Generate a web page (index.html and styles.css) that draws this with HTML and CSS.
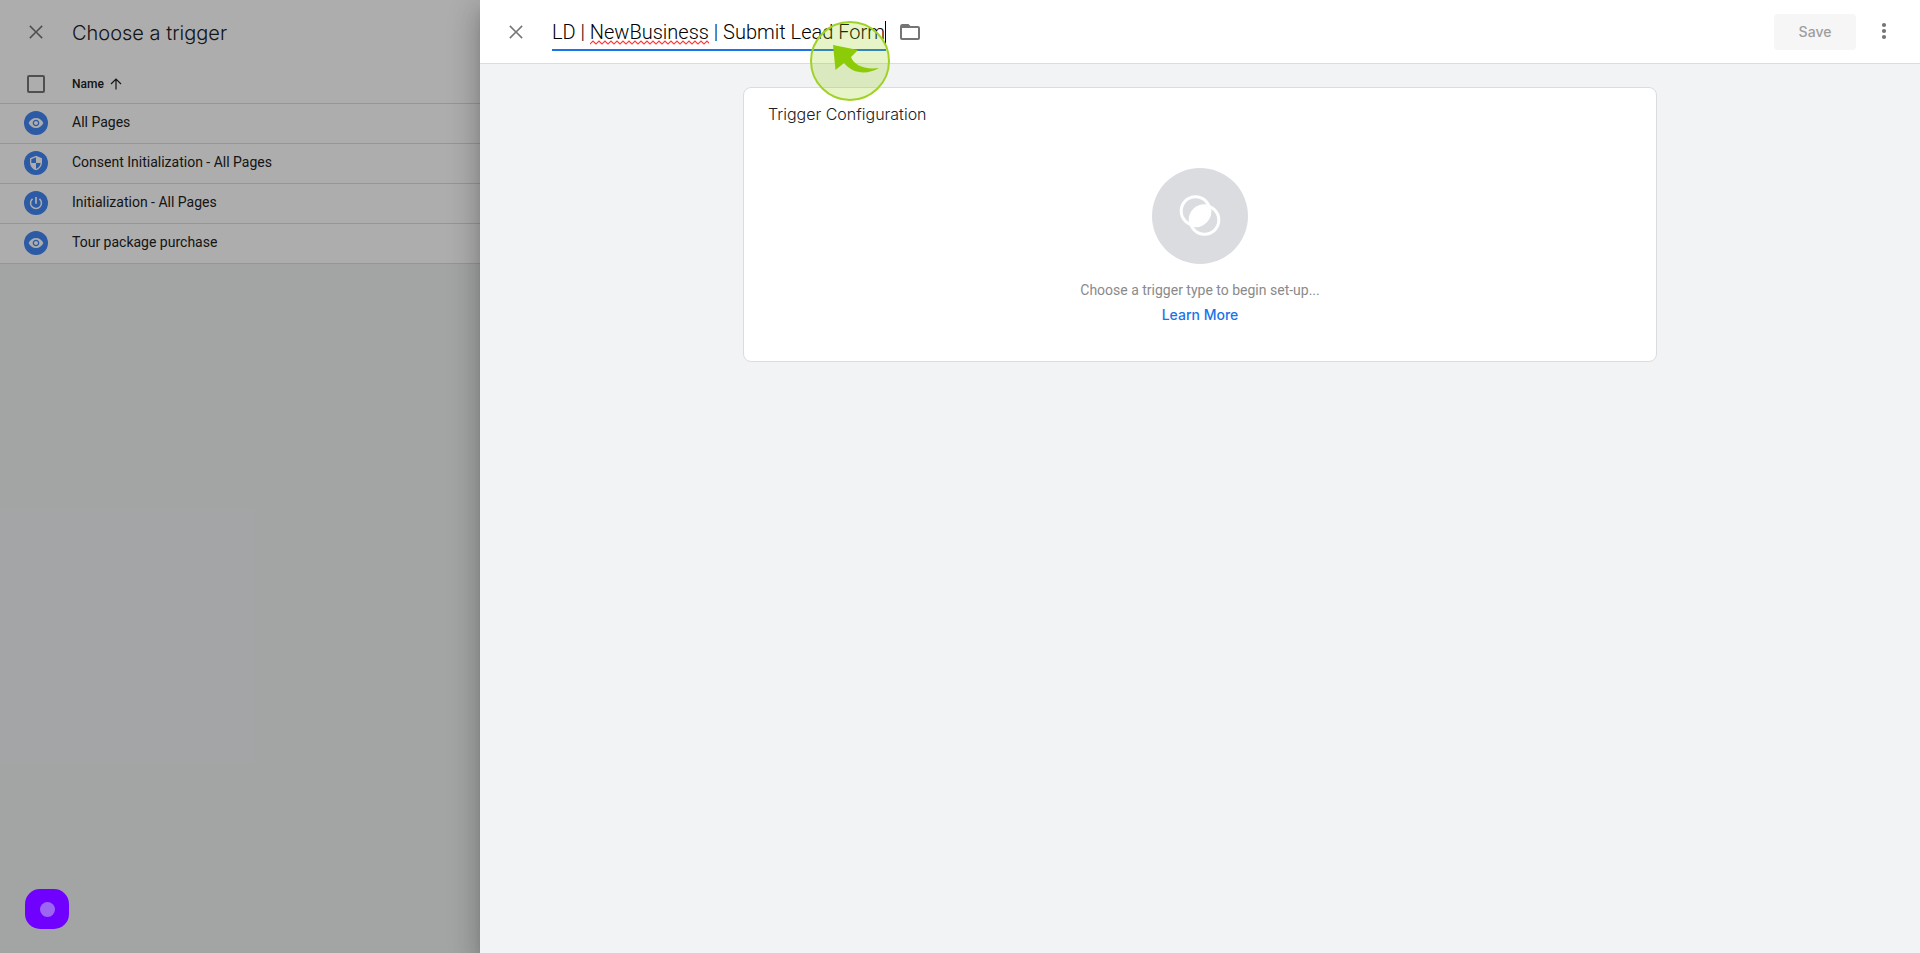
FILE: index.html
```html
<!DOCTYPE html>
<html lang="en">
<head>
<meta charset="utf-8">
<title>Trigger Configuration</title>
<link rel="stylesheet" href="styles.css">
</head>
<body>
<svg class="sprite" aria-hidden="true">
  <symbol id="close" viewBox="0 0 24 24"><path d="M18.7 6.4 17.6 5.3 12 10.9 6.4 5.3 5.3 6.4 10.9 12l-5.6 5.6 1.1 1.1 5.6-5.6 5.6 5.6 1.1-1.1-5.6-5.6z"/></symbol>
  <symbol id="eye" viewBox="0 0 24 24"><path d="M12 4.5C7 4.5 2.73 7.61 1 12c1.73 4.39 6 7.5 11 7.5s9.27-3.11 11-7.5c-1.73-4.39-6-7.5-11-7.5zM12 17c-2.76 0-5-2.24-5-5s2.24-5 5-5 5 2.24 5 5-2.24 5-5 5zm0-8c-1.66 0-3 1.34-3 3s1.34 3 3 3 3-1.34 3-3-1.34-3-3-3z"/></symbol>
  <symbol id="shield" viewBox="0 0 24 24"><path d="M12 1 3 5v6c0 5.55 3.84 10.74 9 12 5.16-1.26 9-6.45 9-12V5l-9-4zm0 10.990h7c-.53 4.120-3.280 7.790-7 8.940V12H5V6.300l7-3.110v8.800z"/></symbol>
  <symbol id="power" viewBox="0 0 24 24"><path d="M13.300 3h-2.600v10h2.600V3zm4.700 2-1.700 1.700A6.900 6.900 0 0 1 19 12a7 7 0 1 1-11.300-5.300L6 5a9.300 9.300 0 1 0 12 0z"/></symbol>
</svg>

<div class="page">
  <main class="picker">
    <header class="picker-header">
      <button class="icon-button" aria-label="Close trigger list"><svg class="icon"><use href="#close"/></svg></button>
      <h1 class="title">Choose a trigger</h1>
    </header>
    <table class="triggers">
      <thead>
        <tr>
          <th class="mark"><input class="check" type="checkbox" aria-label="Select all triggers"></th>
          <th>
            <span class="sort">Name
              <svg class="arrow" viewBox="0 0 12 12"><path d="M6 11.500V1M1 6l5-5 5 5"/></svg>
            </span>
          </th>
        </tr>
      </thead>
      <tbody>
        <tr><td class="mark"><span class="badge"><svg><use href="#eye"/></svg></span></td><td class="name">All Pages</td></tr>
        <tr><td class="mark"><span class="badge"><svg><use href="#shield"/></svg></span></td><td class="name">Consent Initialization - All Pages</td></tr>
        <tr><td class="mark"><span class="badge"><svg><use href="#power"/></svg></span></td><td class="name">Initialization - All Pages</td></tr>
        <tr><td class="mark"><span class="badge"><svg><use href="#eye"/></svg></span></td><td class="name">Tour package purchase</td></tr>
      </tbody>
    </table>
  </main>
  <div class="scrim"></div>

  <section class="sheet">
    <header class="sheet-header">
      <button class="icon-button" aria-label="Close"><svg class="icon"><use href="#close"/></svg></button>
      <div class="field">
        <input class="name-input" type="text" aria-label="Trigger name" spellcheck="false" value="LD | NewBusiness | Submit Lead Form">
        <svg class="squiggle" aria-hidden="true">
          <defs><pattern id="wave" width="6" height="5" patternUnits="userSpaceOnUse"><path d="M-1 3 0 4 3 1 6 4 7 3"/></pattern></defs>
          <rect width="100%" height="5" fill="url(#wave)"/>
        </svg>
        <span class="caret"></span>
        <svg class="pointer" viewBox="0 0 80 80" aria-hidden="true">
          <circle cx="40" cy="40" r="39"/>
          <path d="M23 24 48 29 41 36C44 44 54 49 69 47 57 54 43 53 34 42L25.500 49z"/>
        </svg>
      </div>
      <button class="folder" aria-label="Move to folder">
        <svg viewBox="0 0 20 16"><path class="outline" d="M1 2.500V14Q1 15 2 15H18Q19 15 19 14V4Q19 3 18 3H10L8 1H2Q1 1 1 2.500z"/><path class="tab" d="M1 1h7l2 3H1z"/></svg>
      </button>
      <button class="save" disabled>Save</button>
      <button class="icon-button more" aria-label="More options"><svg class="icon" viewBox="0 0 24 24"><circle cx="12" cy="5" r="2.100"/><circle cx="12" cy="11" r="2.100"/><circle cx="12" cy="17" r="2.100"/></svg></button>
    </header>
    <div class="sheet-body">
      <article class="card">
        <h2 class="card-title">Trigger Configuration</h2>
        <div class="empty">
          <svg class="empty-art" viewBox="0 0 96 96" aria-hidden="true">
            <circle cx="48" cy="48" r="48" fill="#dadce0"/>
            <g fill="none" stroke="#fff" stroke-width="3"><circle cx="43.500" cy="43" r="14.300"/><circle cx="52.500" cy="52" r="14.300"/></g>
            <path fill="#fff" d="M58 38A15.500 15.500 0 0 0 38 58 15.500 15.500 0 0 0 58 38z"/>
          </svg>
          <p class="hint">Choose a trigger type to begin set-up...</p>
          <a class="learn" href="#">Learn More</a>
        </div>
      </article>
    </div>
  </section>
  <button class="recorder" aria-label="Recorder"><span class="recorder-dot"></span></button>
</div>
</body>
</html>
```
FILE: styles.css
```css
* { box-sizing: border-box; }
body { margin: 0; font: 14px/20px Roboto, sans-serif; color: #212121; }
button { border: 0; padding: 0; background: none; font: inherit; }
.sprite { position: absolute; width: 0; height: 0; }

.page { position: relative; display: grid; grid-template-columns: 25% 75%; min-height: 100vh; background: #f1f3f4; overflow: hidden; }
.picker { min-width: 0; }
.picker-header { display: flex; align-items: center; gap: 24px; height: 64px; padding: 0 24px; background: #fff; }
.icon-button { display: flex; width: 24px; height: 24px; flex: none; }
.icon { width: 24px; height: 24px; fill: #757575; }
.title { margin: 0; padding-top: 2px; font: 300 20px/28px Inter, sans-serif; color: #202124; }

.triggers { width: 100%; border-collapse: collapse; background: #fff; }
.triggers th, .triggers td { height: 40px; padding: 0; border-bottom: 1px solid #dadce0; text-align: left; vertical-align: middle; }
.triggers th { height: 39px; padding-top: 2px; font-size: 12px; font-weight: 500; }
.triggers .mark { width: 72px; padding-left: 24px; }
.triggers .name { padding-bottom: 2px; }
.sort { display: flex; align-items: center; gap: 6px; }
.arrow { width: 12px; height: 12px; fill: none; stroke: #212121; stroke-width: 1.200; }
.check { display: block; appearance: none; width: 18px; height: 18px; margin: 0 3px; border: 2px solid #757575; border-radius: 2px; }
.badge { display: flex; align-items: center; justify-content: center; width: 24px; height: 24px; border-radius: 50%; background: #4285f4; }
.badge svg { width: 16px; height: 16px; fill: #fff; }

.scrim { position: absolute; inset: 0; background: rgba(0, 0, 0, .32); }
.sheet { position: relative; background: #f1f3f4; box-shadow: 0 8px 10px -5px rgba(0, 0, 0, .2), 0 16px 24px 2px rgba(0, 0, 0, .14), 0 6px 30px 5px rgba(0, 0, 0, .12); }
.sheet-header { display: flex; align-items: center; height: 64px; padding: 0 24px; border-bottom: 1px solid #dadce0; background: #fff; }
.field { position: relative; width: 334px; margin: 0 14px 0 24px; }
.name-input { display: block; width: 100%; height: 38px; padding: 2px 0 0; border: 0; border-bottom: 2px solid #1a73e8; outline: 0; background: none; font: 300 20px/28px Roboto, sans-serif; color: #000; }
.squiggle { position: absolute; left: 38px; top: 27px; width: 119px; height: 5px; }
.squiggle path { fill: none; stroke: #f33; stroke-width: 1.200; }
.caret { position: absolute; right: 0; top: 8px; width: 1px; height: 24px; background: #000; }
.pointer { position: absolute; z-index: 1; right: -4px; top: 8px; width: 80px; height: 80px; pointer-events: none; }
.pointer circle { fill: rgba(143, 206, 0, .22); stroke: #a0d225; stroke-width: 2; }
.pointer path { fill: #8bcb08; }
.folder { width: 20px; height: 16px; }
.folder svg { display: block; width: 20px; height: 16px; }
.folder .outline { fill: none; stroke: #757575; stroke-width: 2; }
.folder .tab { fill: #757575; }
.save { width: 82px; height: 36px; margin-left: auto; border-radius: 4px; background: #f6f6f6; color: #9e9e9e; font: 500 14px/20px Inter, sans-serif; }
.more { margin-left: 16px; }

.sheet-body { padding: 23px 24px; }
.card { max-width: 914px; margin: 0 auto; padding: 15px 24px 36px; border: 1px solid #dadce0; border-radius: 8px; background: #fff; }
.card-title { margin: 0; font: 300 16px/22px Inter, sans-serif; color: #202124; }
.empty { display: flex; flex-direction: column; align-items: center; padding-top: 43px; }
.empty-art { width: 96px; height: 96px; }
.hint { margin: 16px 0 5px; color: #8a8a8a; }
.learn { color: #1a73e8; font: 500 14px/20px Inter, sans-serif; text-decoration: none; }

.recorder { position: absolute; left: 25px; bottom: 24px; display: flex; align-items: center; justify-content: center; width: 44px; height: 40px; border-radius: 15px; background: #7000ff; }
.recorder-dot { width: 15px; height: 15px; border-radius: 50%; background: #9c66f2; }
```
